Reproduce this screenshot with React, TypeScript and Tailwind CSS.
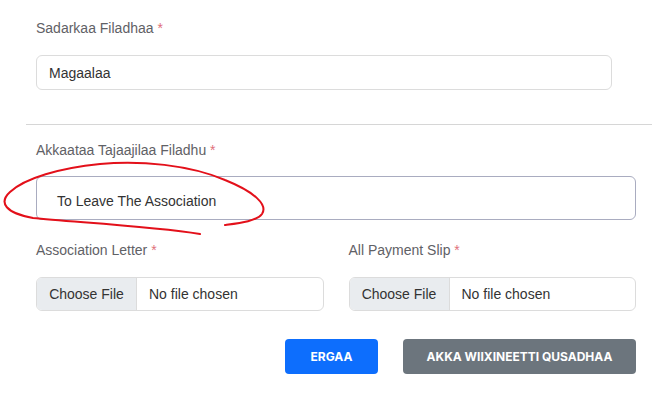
export default function App() {
  return (
    <div className="relative w-[652px] h-[400px] overflow-hidden bg-white font-['Liberation_Sans',Arial,sans-serif] text-sm">
      {/* Sadarkaa */}
      <div className="pl-[36px] pt-[18px]">
        <label className="block leading-5 text-[#5f6166]">
          Sadarkaa Filadhaa <span className="text-[#e0707a]">*</span>
        </label>
        <div className="mt-[17px] flex h-[35px] w-[576px] items-center rounded-md border border-[#dcdcdc] px-3 text-[#333]">
          Magaalaa
        </div>
      </div>

      <div className="ml-[26px] mt-[34px] border-t border-[#d6d6d6]" />

      {/* Akkaataa */}
      <div className="pl-[36px] pr-[16px] pt-[15px]">
        <label className="block leading-5 text-[#5f6166]">
          Akkaataa Tajaajilaa Filadhu <span className="text-[#e0707a]">*</span>
        </label>
        <div className="mt-[16px] flex h-[44px] w-[600px] items-center rounded-md border border-[#a9acc0] pl-[20px] pt-[5px] text-[#333]">
          To Leave The Association
        </div>
      </div>

      {/* Files */}
      <div className="mt-[20px] grid w-[600px] grid-cols-2 gap-x-[25px] ml-[36px]">
        {["Association Letter", "All Payment Slip"].map((t) => (
          <div key={t}>
            <label className="block leading-5 text-[#5f6166]">
              {t} <span className="text-[#e0707a]">*</span>
            </label>
            <div className="mt-[17px] flex h-[34px] overflow-hidden rounded-md border border-[#dcdcdc] text-[#333]">
              <div className="flex w-[100px] items-center justify-center border-r border-[#dcdcdc] bg-[#e9ecef]">
                Choose File
              </div>
              <div className="flex items-center pl-3">No file chosen</div>
            </div>
          </div>
        ))}
      </div>

      {/* Buttons */}
      <div className="mt-[28px] flex justify-end gap-[25px] pr-[16px] font-['Inter',sans-serif] text-xs font-bold text-white">
        <button className="h-[35px] w-[93px] rounded-[4px] bg-[#0d6efd] uppercase">Ergaa</button>
        <button className="h-[35px] w-[233px] rounded-[4px] bg-[#6c757d] uppercase">Akka Wiixineetti Qusadhaa</button>
      </div>

      {/* hand-drawn annotation */}
      <svg className="pointer-events-none absolute left-0 top-0" width="652" height="400" viewBox="0 0 652 400">
        <path
          d="M200 234 C150 226, 70 222, 33 218 C6 213, -2 203, 10 192 C25 178, 60 168, 100 164 C140 160, 190 165, 225 180 C255 192, 268 205, 262 214 C257 221, 240 223, 225 225"
          fill="none"
          stroke="#e3101a"
          strokeWidth="2"
          strokeLinecap="round"
        />
      </svg>
    </div>
  );
}
